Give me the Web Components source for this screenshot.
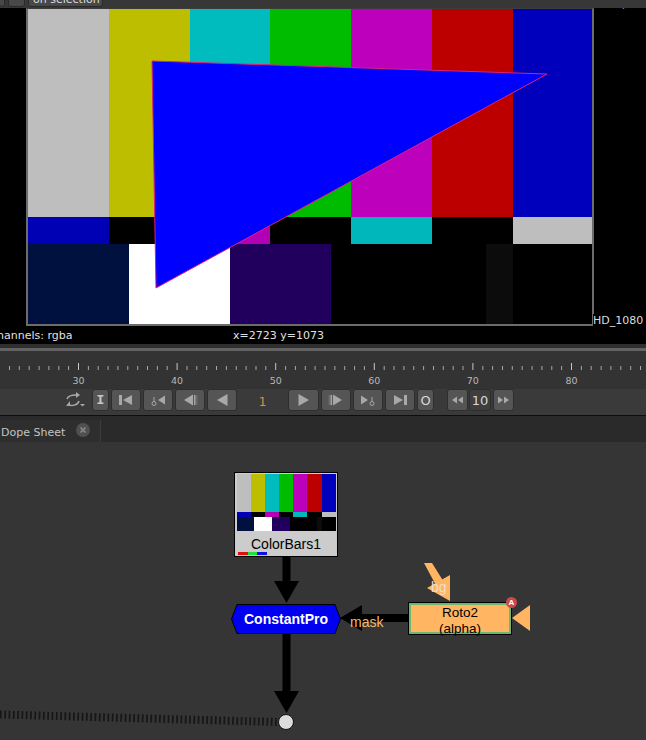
<!DOCTYPE html>
<html>
<head>
<meta charset="utf-8">
<title>Viewer and node graph</title>
<style>
    html, body { margin: 0; padding: 0; height: 100%; overflow: hidden; background: #353535; }
    body { display: flex; flex-direction: column; width: 646px; height: 740px; font-family: "DejaVu Sans", sans-serif; }
</style>
</head>
<body>
<top-strip></top-strip>
<nk-viewer></nk-viewer>
<nk-timeline></nk-timeline>
<nk-tabs></nk-tabs>
<nk-graph></nk-graph>

<script>
// colour bars are used twice: full size in the viewer and small inside the node
class ColorBars extends HTMLElement {
    connectedCallback() {
        const shadow = this.attachShadow({mode: "open"});
        const rows = [
            [208, [[81, "#bebebe"], [81, "#bebe00"], [80, "#00bcbe"], [81, "#00bc00"], [81, "#bc00bc"], [81, "#bc0000"], [79, "#0000bc"]]],
            [27, [[81, "#0000b4"], [81, "#000"], [80, "#b400b4"], [81, "#000"], [81, "#00b8bc"], [81, "#000"], [79, "#bebebe"]]],
            [80, [[101, "#00103f"], [101, "#fff"], [101, "#20005c"], [155, "#000"], [27, "#0c0c0c"], [79, "#000"]]]
        ];
        const html = rows.map(([h, cells]) =>
            `<div class="row" style="flex:${h} 1 0">` +
            cells.map(([w, c]) => `<i style="flex:${w} 1 0;background:${c}"></i>`).join("") +
            `</div>`).join("");
        shadow.innerHTML = `
            <style>
                :host { display: flex; flex-direction: column; }
                .row { display: flex; min-height: 0; }
            </style>
            ${html}
        `;
    }
}
customElements.define("color-bars", ColorBars);

class TopStrip extends HTMLElement {
    connectedCallback() {
        const shadow = this.attachShadow({mode: "open"});
        shadow.innerHTML = `
            <style>
                :host { display: flex; flex: 0 0 8px; height: 8px; overflow: hidden; align-items: flex-end; gap: 3px; background: #373737; padding: 0 0 1px 0; box-sizing: border-box; }
                .btn { height: 22px; box-sizing: border-box; background: #484848; border: 1px solid #2a2a2a; border-radius: 3px; flex: none; font-size: 11px; color: #ddd; line-height: 15px; padding: 6px 0 0 4px; }
                .a { width: 3px; margin-left: -1px; }
                .b { width: 17px; }
                .c { width: 75px; }
            </style>
            <div class="btn a"></div>
            <div class="btn b"></div>
            <div class="btn c">on selection</div>
        `;
    }
}
customElements.define("top-strip", TopStrip);

class NkViewer extends HTMLElement {
    connectedCallback() {
        const shadow = this.attachShadow({mode: "open"});
        shadow.innerHTML = `
            <style>
                :host { display: flex; flex-direction: column; flex: 0 0 336px; position: relative; overflow: hidden; background: #000; color: #ddd; font-size: 11px; }
                .format { margin-left: 26px; width: 568px; height: 318px; box-sizing: border-box; flex: none; border: 2px solid #6c6c6c; border-top: 1px solid #3c3c3c; }
                color-bars { height: 100%; }
                .status { display: flex; height: 18px; line-height: 20px; color: #e0e0e0; }
                .status span:first-child { width: 233px; margin-left: -9px; flex: none; }
                .status span:last-child { margin-left: 9px; }
                .overlay { position: absolute; left: 0; top: 0; }
                .tag { position: absolute; white-space: nowrap; }
                .format-name { left: 593px; top: 306px; background: #000; }
                .size { left: 594px; top: -10px; color: #bbb; }
            </style>
            <div class="format"><color-bars></color-bars></div>
            <div class="status"><span>channels: rgba</span><span>x=2723 y=1073</span></div>
            <svg class="overlay" width="646" height="336">
                <polygon points="152,53 547,66 156,280" fill="#0000ff" stroke="#e0207a" stroke-width="1"/>
            </svg>
            <div class="tag format-name">HD_1080</div>
            <div class="tag size">1920,1080</div>
        `;
    }
}
customElements.define("nk-viewer", NkViewer);

const ICONS = {
    first: `<path d="M8 6h3v10H8zM21 6v10l-9-5z"/>`,
    key: `<path d="M10.5 8h1v5h-1z"/><circle cx="11" cy="14.5" r="2" fill="none" stroke="currentColor"/><path d="M22 6.5v9l-7-4.5z"/>`,
    step: `<path d="M9 11l9-5.5v11zM19 6h1.5v10H19z"/><path d="M21.5 6h.8v10h-.8z" opacity=".5"/>`,
    play: `<path d="M10 11l10.5-6v12z"/>`,
    fast: `<path d="M5 11l5-3.5v7zM11 11l5-3.5v7z"/>`
};

class NkBtn extends HTMLElement {
    connectedCallback() {
        const shadow = this.attachShadow({mode: "open"});
        const w = Number(this.getAttribute("w") || 30);
        const icon = ICONS[this.getAttribute("icon")];
        const flip = this.hasAttribute("flip") ? `transform="translate(${w} 0) scale(-1 1)"` : "";
        shadow.innerHTML = `
            <style>
                :host { display: flex; position: relative; align-items: center; justify-content: center; height: 22px; box-sizing: border-box; background: #555; border: 1px solid #2e2e2e; border-radius: 3px; color: #a8a8a8; font-size: 12px; flex: none; }
                svg { display: block; position: absolute; }
            </style>
            ${icon ? `<svg width="${w - 2}" height="20" viewBox="1 1 ${w - 2} 20" fill="currentColor"><g ${flip}>${icon}</g></svg>` : ""}
            <slot></slot>
        `;
        this.style.width = w + "px";
    }
}
customElements.define("nk-btn", NkBtn);

class NkTimeline extends HTMLElement {
    connectedCallback() {
        const shadow = this.attachShadow({mode: "open"});
        // frame ruler: frame 30 sits at x=78.5, one frame is 9.86px
        let ticks = "";
        for (let f = 23; f <= 88; f++) {
            const x = (78.5 + (f - 30) * 9.86).toFixed(1);
            const major = f % 10 === 0;
            ticks += `<line x1="${x}" x2="${x}" y1="${major ? 12 : 15}" y2="19" stroke="${major ? "#c8c8c8" : "#a8a8a8"}"/>`;
        }
        const labels = [30, 40, 50, 60, 70, 80].map(n => `<span>${n}</span>`).join("");
        shadow.innerHTML = `
            <style>
                :host { display: flex; flex-direction: column; flex: 0 0 72px; height: 72px; background: #333; border-bottom: 1px solid #0e0e0e; box-sizing: border-box; }
                .rule-top { height: 4px; background: #2f2f2f; flex: none; }
                .rule-light { height: 3px; background: #636363; flex: none; }
                .ruler { height: 38px; flex: none; display: flex; flex-direction: column; }
                .ruler svg { display: block; flex: none; }
                .labels { display: flex; padding-left: 29.2px; font-size: 9.5px; color: #b8b8b8; line-height: 12px; margin-top: 5px; }
                .labels span { width: 98.6px; text-align: center; flex: none; }
                .bar { display: flex; align-items: center; gap: 2px; height: 22px; flex: none; padding-left: 92px; position: relative; background: #3a3a3a; }
                .foot { flex: 1; background: #3a3a3a; }
                .loop { position: absolute; left: 65px; top: 3px; color: #a8a8a8; }
                .field { width: 47px; text-align: center; color: #dc9433; font-size: 12px; flex: none; line-height: 22px; padding-top: 2px; box-sizing: border-box; height: 22px; }
                .gap { width: 9px; flex: none; }
                nk-btn.txt { font-family: "DejaVu Sans", sans-serif; color: #d8d8d8; font-size: 13px; }
                .serif { font-family: "Liberation Mono", monospace; font-weight: bold; font-size: 13px; color: #c8c8c8; }
                .ten { background: #3e3e3e; font-size: 13px; color: #d8d8d8; margin-left: -1px; }
            </style>
            <div class="rule-top"></div>
            <div class="rule-light"></div>
            <div class="ruler">
                <svg width="646" height="19">${ticks}</svg>
                <div class="labels">${labels}</div>
            </div>
            <div class="bar">
                <svg class="loop" width="20" height="16" viewBox="0 0 20 16" fill="currentColor">
                    <path d="M2 7C3 4 6 3 11 3" fill="none" stroke="currentColor" stroke-width="1.5"/>
                    <path d="M11 0l4 3-4 3z"/>
                    <path d="M14 9c-1 4-8 6-11 3" fill="none" stroke="currentColor" stroke-width="1.5"/>
                    <path d="M5 9v5H1z"/>
                    <path d="M15 12h5l-2.500 2.500z"/>
                </svg>
                <nk-btn w="17" class="serif">I</nk-btn>
                <nk-btn icon="first"></nk-btn>
                <nk-btn icon="key"></nk-btn>
                <nk-btn icon="step"></nk-btn>
                <nk-btn icon="play"></nk-btn>
                <div class="field">1</div>
                <nk-btn w="31" icon="play" flip></nk-btn>
                <nk-btn icon="step" flip></nk-btn>
                <nk-btn icon="key" flip></nk-btn>
                <nk-btn icon="first" flip></nk-btn>
                <nk-btn w="17" class="txt">O</nk-btn>
                <div class="gap"></div>
                <nk-btn w="21" icon="fast"></nk-btn>
                <nk-btn w="22" class="ten">10</nk-btn>
                <nk-btn w="21" icon="fast" flip></nk-btn>
            </div>
            <div class="foot"></div>
        `;
    }
}
customElements.define("nk-timeline", NkTimeline);

class NkTabs extends HTMLElement {
    connectedCallback() {
        const shadow = this.attachShadow({mode: "open"});
        shadow.innerHTML = `
            <style>
                :host { display: flex; flex: 0 0 26px; height: 26px; background: #2a2a2a; font-size: 11px; color: #c4c4c4; box-sizing: border-box; }
                .tab { display: flex; align-items: center; width: 101px; margin-top: 4px; box-sizing: border-box; padding-left: 1px; background: #2e2e2e; border-right: 1px solid #3c3c3c; }
                .close { width: 14px; height: 14px; border-radius: 50%; background: #505050; margin-left: 11px; flex: none; margin-top: -2px; }
                .close svg { display: block; }
                span { margin-top: 2px; }
            </style>
            <div class="tab">
                <span>Dope Sheet</span>
                <div class="close"><svg width="14" height="14"><path d="M4.500 4.500l5 5M9.500 4.500l-5 5" stroke="#8a8a8a" stroke-width="1.600"/></svg></div>
            </div>
        `;
    }
}
customElements.define("nk-tabs", NkTabs);

class NkNode extends HTMLElement {
    connectedCallback() {
        const shadow = this.attachShadow({mode: "open"});
        shadow.innerHTML = `
            <style>
                :host { display: block; position: absolute; box-sizing: border-box; font-family: "Liberation Sans", Arial, sans-serif; color: #000; }
            </style>
            <slot></slot>
        `;
    }
}
customElements.define("nk-node", NkNode);

class NkGraph extends HTMLElement {
    connectedCallback() {
        const shadow = this.attachShadow({mode: "open"});
        // graph coordinates: y = screen y - 442
        shadow.innerHTML = `
            <style>
                :host { display: block; position: relative; flex: 1; background: #353535; overflow: hidden; font-family: "Liberation Sans", Arial, sans-serif; }
                svg { position: absolute; left: 0; top: 0; }
                .bars { left: 234px; top: 30px; width: 104px; height: 85px; background: #ccc; border: 1px solid #000; display: flex; flex-direction: column; align-items: center; }
                .bars color-bars { width: 99px; height: 57px; margin-top: 1px; flex: none; }
                .bars .name { font-size: 14px; line-height: 15px; margin-top: 6px; }
                .swatch { position: absolute; left: 3px; bottom: 1px; width: 29px; height: 3px; background: linear-gradient(90deg, #e01010 0 33%, #20e040 33% 66%, #1010e0 66%); }
                .hex { left: 231px; top: 162px; width: 110px; height: 30px; }
                .hex svg { width: 110px; height: 30px; }
                .hex div { position: relative; text-align: center; color: #fff; font-weight: bold; font-size: 14px; line-height: 30px; }
                .roto { left: 408px; top: 160px; width: 104px; height: 33px; background: #ffb562; border: 1px solid #000; box-shadow: inset 0 0 0 2px #6fb46f; text-align: center; font-size: 13.5px; line-height: 15.5px; padding-top: 2px; }
                .badge { position: absolute; left: 506px; top: 155px; width: 11px; height: 11px; border-radius: 50%; background: #c84a4a; color: #fff; font: bold 8px/11px "Liberation Sans", sans-serif; text-align: center; }
                .lab { position: absolute; font-size: 14px; line-height: 15px; }
                .mask { left: 350px; top: 173px; color: #f5b868; }
                .bg { left: 431px; top: 138px; color: #f0e0c8; }
            </style>
            <svg width="646" height="298">
                <path d="M0 272.500L278 280" stroke="#161616" stroke-width="8" stroke-dasharray="1.700 2.600" fill="none"/>
                <path d="M286.500 114V140" stroke="#000" stroke-width="8"/>
                <path d="M274 139h25l-12.500 22z" fill="#000"/>
                <path d="M286.500 190V250" stroke="#000" stroke-width="8"/>
                <path d="M274 249h25l-12.500 22z" fill="#000"/>
                <path d="M408 176H361" stroke="#000" stroke-width="8"/>
                <path d="M340 176l22-13v26z" fill="#000"/>
                <path d="M424 121h8l15 24-8 4z" fill="#ffb562"/>
                <path d="M450 133v26l-23-13z" fill="#ffb562"/>
                <path d="M512 176l18-13v26z" fill="#ffb562"/>
                <circle cx="286" cy="280" r="7.500" fill="#dcdcdc" stroke="#111"/>
            </svg>
            <nk-node class="bars">
                <color-bars></color-bars>
                <div class="name">ColorBars1</div>
                <div class="swatch"></div>
            </nk-node>
            <nk-node class="hex">
                <svg viewBox="0 0 110 30"><polygon points="0.500,15 6,0.500 104,0.500 109.500,15 104,29.500 6,29.500" fill="#0000f0" stroke="#000"/></svg>
                <div>ConstantPro</div>
            </nk-node>
            <nk-node class="roto">Roto2<br>(alpha)</nk-node>
            <div class="badge">A</div>
            <div class="lab mask">mask</div>
            <div class="lab bg">bg</div>
        `;
    }
}
customElements.define("nk-graph", NkGraph);
</script>
</body>
</html>
